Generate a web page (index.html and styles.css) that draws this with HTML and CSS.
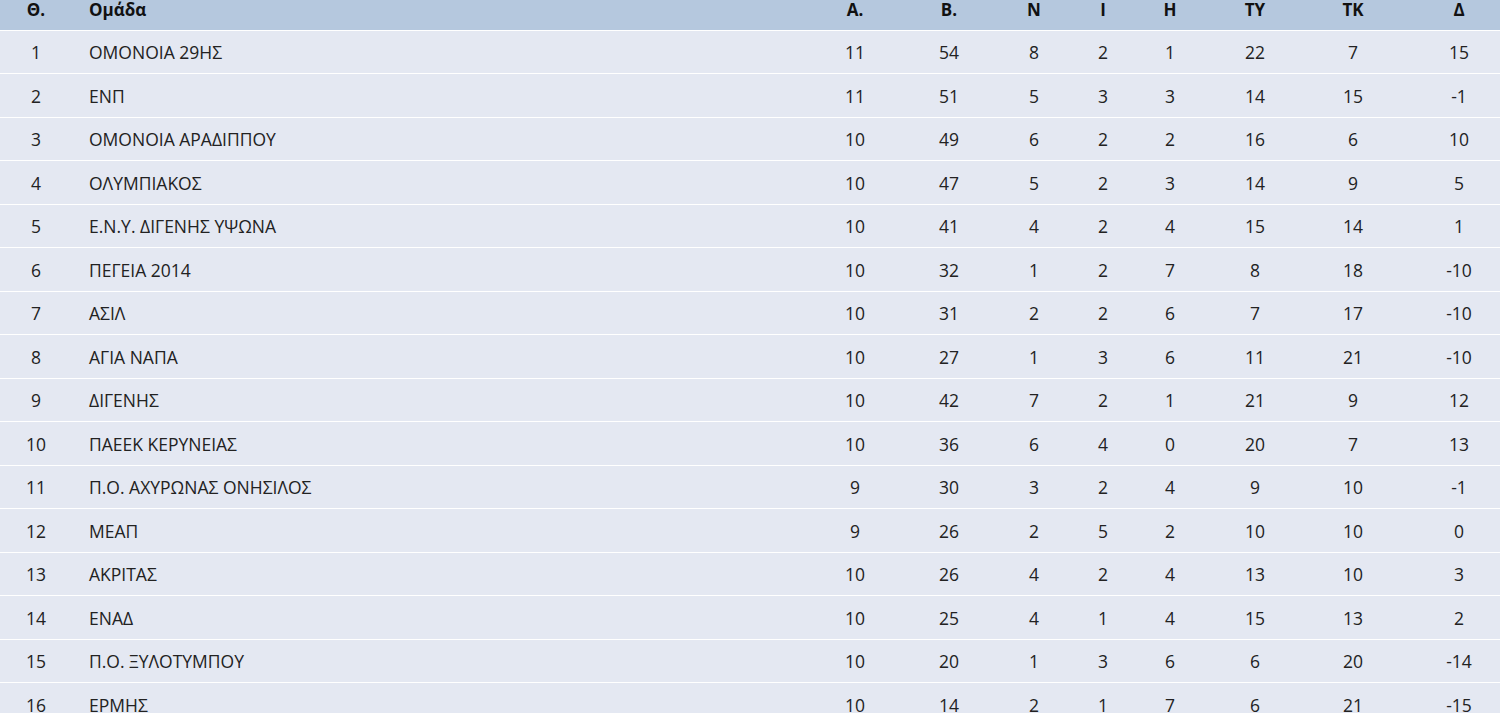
FILE: index.html
```html
<!DOCTYPE html>
<html lang="el">
<head>
<meta charset="utf-8">
<title>Βαθμολογία</title>
<link rel="stylesheet" href="styles.css">
</head>
<body>
<table class="standings">
<colgroup>
<col class="c-pos"><col class="c-team"><col class="c-a"><col class="c-b"><col class="c-n"><col class="c-i"><col class="c-h"><col class="c-ty"><col class="c-tk"><col class="c-d">
</colgroup>
<thead>
<tr><th>Θ.</th><th class="team">Ομάδα</th><th>Α.</th><th>Β.</th><th>Ν</th><th>Ι</th><th>Η</th><th>ΤΥ</th><th>ΤΚ</th><th>Δ</th></tr>
</thead>
<tbody>
<tr><td>1</td><td class="team">ΟΜΟΝΟΙΑ 29ΗΣ</td><td>11</td><td>54</td><td>8</td><td>2</td><td>1</td><td>22</td><td>7</td><td>15</td></tr>
<tr><td>2</td><td class="team">ΕΝΠ</td><td>11</td><td>51</td><td>5</td><td>3</td><td>3</td><td>14</td><td>15</td><td>-1</td></tr>
<tr><td>3</td><td class="team">ΟΜΟΝΟΙΑ ΑΡΑΔΙΠΠΟΥ</td><td>10</td><td>49</td><td>6</td><td>2</td><td>2</td><td>16</td><td>6</td><td>10</td></tr>
<tr><td>4</td><td class="team">ΟΛΥΜΠΙΑΚΟΣ</td><td>10</td><td>47</td><td>5</td><td>2</td><td>3</td><td>14</td><td>9</td><td>5</td></tr>
<tr><td>5</td><td class="team">Ε.Ν.Υ. ΔΙΓΕΝΗΣ ΥΨΩΝΑ</td><td>10</td><td>41</td><td>4</td><td>2</td><td>4</td><td>15</td><td>14</td><td>1</td></tr>
<tr><td>6</td><td class="team">ΠΕΓΕΙΑ 2014</td><td>10</td><td>32</td><td>1</td><td>2</td><td>7</td><td>8</td><td>18</td><td>-10</td></tr>
<tr><td>7</td><td class="team">ΑΣΙΛ</td><td>10</td><td>31</td><td>2</td><td>2</td><td>6</td><td>7</td><td>17</td><td>-10</td></tr>
<tr><td>8</td><td class="team">ΑΓΙΑ ΝΑΠΑ</td><td>10</td><td>27</td><td>1</td><td>3</td><td>6</td><td>11</td><td>21</td><td>-10</td></tr>
<tr><td>9</td><td class="team">ΔΙΓΕΝΗΣ</td><td>10</td><td>42</td><td>7</td><td>2</td><td>1</td><td>21</td><td>9</td><td>12</td></tr>
<tr><td>10</td><td class="team">ΠΑΕΕΚ ΚΕΡΥΝΕΙΑΣ</td><td>10</td><td>36</td><td>6</td><td>4</td><td>0</td><td>20</td><td>7</td><td>13</td></tr>
<tr><td>11</td><td class="team">Π.Ο. ΑΧΥΡΩΝΑΣ ΟΝΗΣΙΛΟΣ</td><td>9</td><td>30</td><td>3</td><td>2</td><td>4</td><td>9</td><td>10</td><td>-1</td></tr>
<tr><td>12</td><td class="team">ΜΕΑΠ</td><td>9</td><td>26</td><td>2</td><td>5</td><td>2</td><td>10</td><td>10</td><td>0</td></tr>
<tr><td>13</td><td class="team">ΑΚΡΙΤΑΣ</td><td>10</td><td>26</td><td>4</td><td>2</td><td>4</td><td>13</td><td>10</td><td>3</td></tr>
<tr><td>14</td><td class="team">ΕΝΑΔ</td><td>10</td><td>25</td><td>4</td><td>1</td><td>4</td><td>15</td><td>13</td><td>2</td></tr>
<tr><td>15</td><td class="team">Π.Ο. ΞΥΛΟΤΥΜΠΟΥ</td><td>10</td><td>20</td><td>1</td><td>3</td><td>6</td><td>6</td><td>20</td><td>-14</td></tr>
<tr><td>16</td><td class="team">ΕΡΜΗΣ</td><td>10</td><td>14</td><td>2</td><td>1</td><td>7</td><td>6</td><td>21</td><td>-15</td></tr>
</tbody>
</table>
</body>
</html>
```
FILE: styles.css
```css
html, body {
  margin: 0;
  padding: 0;
  background: #ffffff;
}
body {
  font-family: "Open Sans", "Noto Sans", sans-serif;
  font-size: 17.5px;
  color: #222222;
}
.standings {
  width: 1500px;
  border-collapse: collapse;
  table-layout: fixed;
}
.c-pos { width: 72px; }
.c-team { width: 720px; }
.c-a { width: 126px; }
.c-b { width: 62px; }
.c-n { width: 108px; }
.c-i { width: 30px; }
.c-h { width: 104px; }
.c-ty { width: 66px; }
.c-tk { width: 130px; }
.c-d { width: 82px; }

.standings th,
.standings td {
  text-align: center;
  padding: 0;
  white-space: nowrap;
}
.standings th.team,
.standings td.team {
  text-align: left;
  padding-left: 17px;
}
.standings thead th {
  background: #b5c8de;
  color: #111111;
  font-size: 17px;
  font-weight: 700;
  line-height: 20px;
  padding-bottom: 9.5px;
  border-bottom: 1px solid #ffffff;
}
.standings tbody td {
  background: #e4e8f2;
  line-height: 24px;
  padding-top: 9.5px;
  padding-bottom: 9px;
  border-bottom: 1px solid #ffffff;
}
```
